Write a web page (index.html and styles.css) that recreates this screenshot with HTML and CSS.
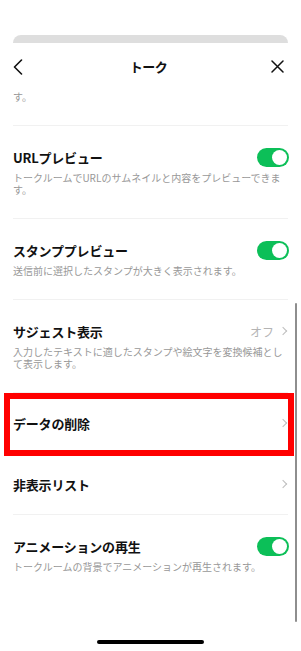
FILE: index.html
```html
<!DOCTYPE html>
<html lang="ja">
<head>
    <meta charset="UTF-8">
    <meta name="viewport" content="width=device-width, initial-scale=1.0">
    <title>トーク</title>
    <link rel="stylesheet" href="styles.css">
</head>
<body>

    <div id="screen">
        <!-- Sheet behind the modal -->
        <div class="sheet-back"></div>

        <!-- Navigation -->
        <header class="nav">
            <svg class="nav-back" width="10" height="16" viewBox="0 0 10 16">
                <path d="M8.5 1 L1.5 8 L8.5 15" fill="none" stroke="#111" stroke-width="1.6" stroke-linecap="round" stroke-linejoin="round"/>
            </svg>
            <h1>トーク</h1>
            <svg class="nav-close" width="13" height="13" viewBox="0 0 13 13">
                <path d="M1 1 L12 12 M12 1 L1 12" fill="none" stroke="#111" stroke-width="1.5" stroke-linecap="round"/>
            </svg>
        </header>

        <!-- Settings list -->
        <main class="list">
            <div class="item item-cut">
                <p class="desc">す。</p>
            </div>

            <div class="item">
                <div class="row">
                    <span class="title">URLプレビュー</span>
                    <span class="toggle on"></span>
                </div>
                <p class="desc">トークルームでURLのサムネイルと内容をプレビューできます。</p>
            </div>

            <div class="item">
                <div class="row">
                    <span class="title">スタンププレビュー</span>
                    <span class="toggle on"></span>
                </div>
                <p class="desc">送信前に選択したスタンプが大きく表示されます。</p>
            </div>

            <div class="item">
                <div class="row">
                    <span class="title">サジェスト表示</span>
                    <span class="value">オフ <i class="chevron"></i></span>
                </div>
                <p class="desc">入力したテキストに適したスタンプや絵文字を変換候補として表示します。</p>
            </div>

            <div class="item item-link highlight">
                <div class="row">
                    <span class="title">データの削除</span>
                    <i class="chevron"></i>
                </div>
            </div>

            <div class="item item-link">
                <div class="row">
                    <span class="title">非表示リスト</span>
                    <i class="chevron"></i>
                </div>
            </div>

            <div class="item">
                <div class="row">
                    <span class="title">アニメーションの再生</span>
                    <span class="toggle on"></span>
                </div>
                <p class="desc">トークルームの背景でアニメーションが再生されます。</p>
            </div>
        </main>

        <div class="scrollbar"></div>
        <div class="home-bar"></div>
    </div>

</body>
</html>
```

FILE: styles.css
```css
/* General styling */
body {
    font-family: "Noto Sans CJK JP", "Noto Sans", sans-serif;
    background-color: #fff;
    color: #111;
    margin: 0;
    padding: 0;
}

#screen {
    position: relative;
    width: 301px;
    height: 651px;
    overflow: hidden;
}

/* Card behind the sheet */
.sheet-back {
    margin: 35px 13px 0;
    height: 8px;
    background-color: #dedede;
    border-radius: 10px 10px 0 0;
}

/* Navigation */
.nav {
    display: grid;
    grid-template-columns: 1fr auto 1fr;
    align-items: center;
    height: 47px;
    padding: 0 17px 0 13px;
}

.nav-back {
    justify-self: start;
}

.nav-close {
    justify-self: end;
}

.nav h1 {
    margin: 0;
    font-size: 13px;
    font-weight: bold;
    letter-spacing: -0.5px;
}

/* List */
.list {
    padding: 0 13px;
}

.item {
    padding: 21px 0 22px;
    border-top: 1px solid #f1f1f1;
}

.item-cut {
    padding-top: 1px;
    border-top: none;
}

.item-link {
    padding: 20px 0;
}

.row {
    display: flex;
    align-items: center;
    justify-content: space-between;
    height: 20px;
}

.title {
    font-size: 13px;
    font-weight: bold;
    letter-spacing: -0.2px;
}

.desc {
    margin: 5px 0 0;
    font-size: 10px;
    line-height: 12px;
    color: #989898;
}

.item-cut .desc {
    margin-top: 0;
}

/* Toggle switch */
.toggle {
    position: relative;
    width: 32px;
    height: 19px;
    border-radius: 10px;
    background-color: #e5e5e5;
    margin-right: -1px;
}

.toggle.on {
    background-color: #0cbf58;
}

.toggle::after {
    content: "";
    position: absolute;
    top: 2px;
    left: 2px;
    width: 15px;
    height: 15px;
    border-radius: 50%;
    background-color: #fff;
}

.toggle.on::after {
    left: 15px;
}

/* Right side value and chevron */
.value {
    display: flex;
    align-items: center;
    gap: 6px;
    font-size: 12px;
    color: #b4b4b4;
}

.chevron {
    width: 5px;
    height: 5px;
    border-top: 1px solid #bdbdbd;
    border-right: 1px solid #bdbdbd;
    transform: rotate(45deg);
    margin-right: 2px;
}

/* Red annotation box */
.highlight {
    position: relative;
}

.highlight::after {
    content: "";
    position: absolute;
    top: 0;
    bottom: -3px;
    left: -9px;
    right: -6px;
    border: 6px solid #f00;
}

/* Scroll indicator */
.scrollbar {
    position: absolute;
    right: 4px;
    top: 303px;
    width: 2.5px;
    height: 319px;
    border-radius: 2px;
    background-color: #8e8e8e;
}

/* Home indicator */
.home-bar {
    position: absolute;
    left: 97px;
    bottom: 7px;
    width: 107px;
    height: 4px;
    border-radius: 2px;
    background-color: #000;
}
```
